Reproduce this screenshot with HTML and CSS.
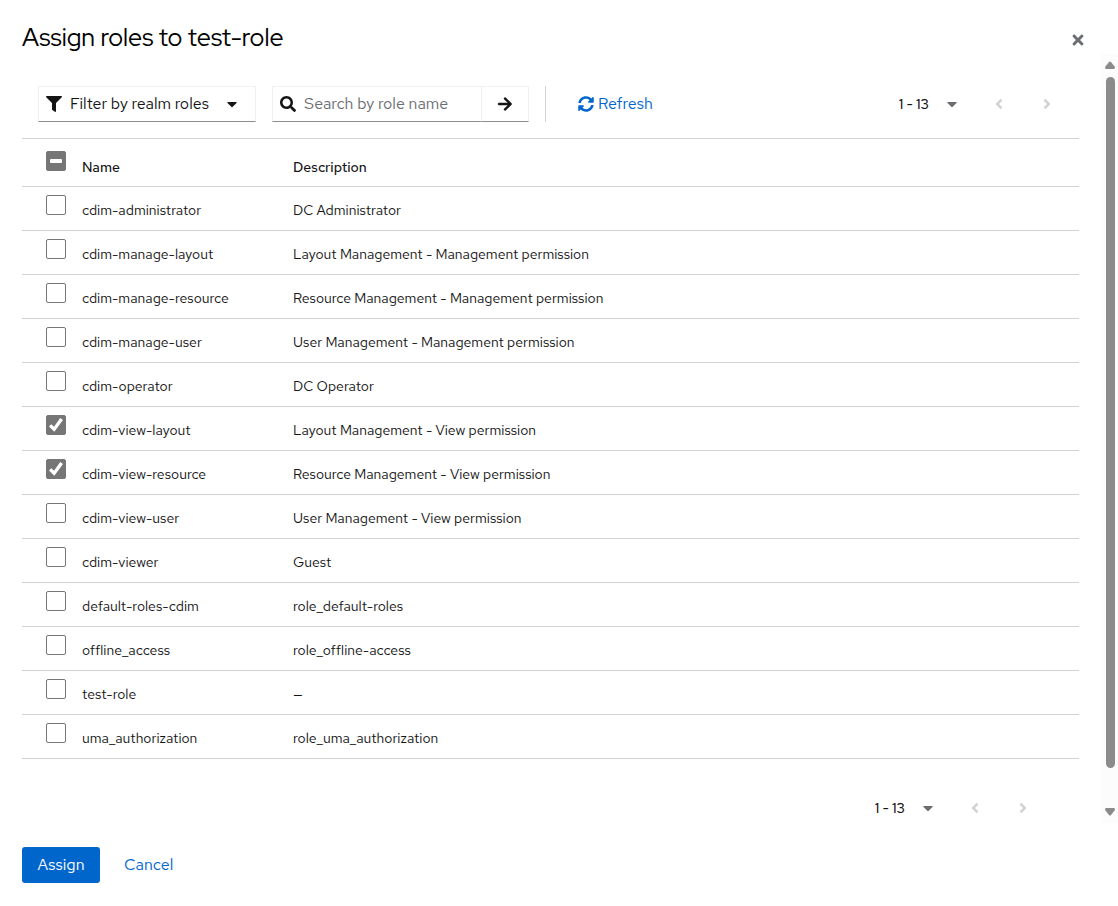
FILE: index.html
```html
<!DOCTYPE html>
<html lang="en">
<head>
<meta charset="utf-8">
<meta name="viewport" content="width=device-width, initial-scale=1">
<title>Assign roles to test-role</title>
<link rel="stylesheet" href="styles.css">
</head>
<body>
<svg class="sprite" aria-hidden="true">
  <symbol id="caret" viewBox="0 0 320 512"><path d="M31 192h258c18 0 27 22 14 34L174 355c-8 8-20 8-28 0L17 226c-13-12-4-34 14-34z"/></symbol>
  <symbol id="left" viewBox="0 0 256 512"><path d="M31.7 239l136-136c9.4-9.4 24.600-9.400 33.900 0l22.600 22.600c9.400 9.400 9.400 24.600 0 33.900L127.900 256l96.400 96.400c9.400 9.400 9.400 24.600 0 33.900L201.700 409c-9.400 9.400-24.600 9.400-33.900 0l-136-136c-9.500-9.400-9.500-24.600-.1-34z"/></symbol>
  <symbol id="right" viewBox="0 0 256 512"><path d="M224.300 273l-136 136c-9.400 9.400-24.600 9.400-33.900 0l-22.600-22.600c-9.400-9.400-9.400-24.600 0-33.900l96.400-96.400-96.400-96.400c-9.400-9.400-9.400-24.600 0-33.900L54.300 103c9.400-9.400 24.600-9.400 33.900 0l136 136c9.500 9.400 9.500 24.600.1 34z"/></symbol>
</svg>
<main class="modal" role="dialog" aria-labelledby="title">
  <header class="modal-header">
    <h1 class="title" id="title">Assign roles to test-role</h1>
    <button class="close" type="button" aria-label="Close"><svg width="12" height="16" viewBox="0 0 352 512"><path d="M242.720 256l100.070-100.070c12.280-12.280 12.280-32.190 0-44.480l-22.240-22.240c-12.280-12.280-32.190-12.280-44.480 0L176 189.280 75.930 89.210c-12.280-12.280-32.190-12.280-44.480 0L9.210 111.450c-12.280 12.280-12.280 32.190 0 44.480L109.280 256 9.210 356.070c-12.280 12.280-12.280 32.190 0 44.480l22.240 22.240c12.280 12.280 32.200 12.280 44.480 0L176 322.720l100.070 100.070c12.280 12.280 32.200 12.280 44.480 0l22.240-22.240c12.280-12.280 12.280-32.190 0-44.480L242.720 256z"/></svg></button>
  </header>

  <div class="modal-body">
    <div class="content">
      <div class="toolbar">
        <button class="filter" type="button" aria-haspopup="listbox">
          <svg width="16" height="16" viewBox="0 0 512 512"><path d="M487.976 0H24.028C2.710 0-8.047 25.866 7.058 40.971L192 225.941V432c0 7.831 3.821 15.170 10.237 19.662l80 55.980C298.020 518.690 320 507.493 320 487.980V225.941l184.947-184.970C520.021 25.896 509.338 0 487.976 0z"/></svg>
          <span class="filter-text">Filter by realm roles</span>
          <svg width="10" height="16"><use href="#caret"/></svg>
        </button>
        <form class="search" role="search">
          <label class="search-field">
            <svg width="16" height="16" viewBox="0 0 512 512"><path fill-rule="evenodd" d="M505 442.700L405.300 343c-4.500-4.500-10.600-7-17-7H372c27.600-35.300 44-79.700 44-128C416 93.100 322.900 0 208 0S0 93.100 0 208s93.100 208 208 208c48.300 0 92.700-16.400 128-44v16.300c0 6.400 2.500 12.500 7 17l99.700 99.700c9.400 9.400 24.600 9.400 33.900 0l28.300-28.300c9.400-9.400 9.400-24.600.1-34zM208 336c-70.700 0-128-57.200-128-128 0-70.700 57.200-128 128-128 70.700 0 128 57.200 128 128 0 70.700-57.200 128-128 128z"/></svg>
            <input class="search-input" type="text" placeholder="Search by role name" aria-label="Search by role name">
          </label>
          <button class="search-go" type="button" aria-label="Search"><svg width="14" height="16" viewBox="0 0 448 512"><path d="M190.500 66.900l22.200-22.200c9.400-9.400 24.600-9.400 33.900 0L441 239c9.400 9.400 9.400 24.600 0 33.900L246.600 467.300c-9.400 9.400-24.600 9.400-33.900 0l-22.200-22.200c-9.500-9.500-9.300-25 .4-34.300L311.400 296H24c-13.300 0-24-10.700-24-24v-32c0-13.300 10.700-24 24-24h287.400L190.900 101.200c-9.800-9.300-10-24.800-.4-34.300z"/></svg></button>
        </form>
        <div class="divider"></div>
        <button class="link refresh" type="button">
          <svg width="16" height="16" viewBox="0 0 512 512"><path d="M370.720 133.280C339.458 104.008 298.888 87.962 255.848 88c-77.458.068-144.328 53.178-162.791 126.850-1.344 5.363-6.122 9.150-11.651 9.150H24.103c-7.498 0-13.194-6.807-11.807-14.176C33.933 94.924 134.813 8 256 8c66.448 0 126.791 26.136 171.315 68.685L463.030 40.970C478.149 25.851 504 36.559 504 57.941V192c0 13.255-10.745 24-24 24H345.941c-21.382 0-32.090-25.851-16.971-40.971l41.750-41.749zM32 296h134.059c21.382 0 32.090 25.851 16.971 40.971l-41.750 41.750c31.262 29.273 71.835 45.319 114.876 45.280 77.418-.070 144.315-53.144 162.787-126.849 1.344-5.363 6.122-9.150 11.651-9.150h57.304c7.498 0 13.194 6.807 11.807 14.176C478.067 417.076 377.187 504 256 504c-66.448 0-126.791-26.136-171.315-68.685L48.970 471.030C33.851 486.149 8 475.441 8 454.059V320c0-13.255 10.745-24 24-24z"/></svg>
          Refresh
        </button>
        <nav class="pager" aria-label="Top pagination">
          <button class="pager-range" type="button">1 - 13 <svg width="10" height="16"><use href="#caret"/></svg></button>
          <button class="pager-step" type="button" disabled aria-label="Previous page"><svg width="8" height="16"><use href="#left"/></svg></button>
          <button class="pager-step" type="button" disabled aria-label="Next page"><svg width="8" height="16"><use href="#right"/></svg></button>
        </nav>
      </div>

      <table class="roles">
        <thead>
          <tr><th class="cell-check"><input class="check check-mixed" type="checkbox" aria-checked="mixed" aria-label="Select all rows"></th><th class="cell-name" scope="col">Name</th><th scope="col">Description</th></tr>
        </thead>
        <tbody>
          <tr><td class="cell-check"><input class="check" type="checkbox" aria-labelledby="r1"></td><td id="r1">cdim-administrator</td><td>DC Administrator</td></tr>
          <tr><td class="cell-check"><input class="check" type="checkbox" aria-labelledby="r2"></td><td id="r2">cdim-manage-layout</td><td>Layout Management - Management permission</td></tr>
          <tr><td class="cell-check"><input class="check" type="checkbox" aria-labelledby="r3"></td><td id="r3">cdim-manage-resource</td><td>Resource Management - Management permission</td></tr>
          <tr><td class="cell-check"><input class="check" type="checkbox" aria-labelledby="r4"></td><td id="r4">cdim-manage-user</td><td>User Management - Management permission</td></tr>
          <tr><td class="cell-check"><input class="check" type="checkbox" aria-labelledby="r5"></td><td id="r5">cdim-operator</td><td>DC Operator</td></tr>
          <tr><td class="cell-check"><input class="check" type="checkbox" checked aria-labelledby="r6"></td><td id="r6">cdim-view-layout</td><td>Layout Management - View permission</td></tr>
          <tr><td class="cell-check"><input class="check" type="checkbox" checked aria-labelledby="r7"></td><td id="r7">cdim-view-resource</td><td>Resource Management - View permission</td></tr>
          <tr><td class="cell-check"><input class="check" type="checkbox" aria-labelledby="r8"></td><td id="r8">cdim-view-user</td><td>User Management - View permission</td></tr>
          <tr><td class="cell-check"><input class="check" type="checkbox" aria-labelledby="r9"></td><td id="r9">cdim-viewer</td><td>Guest</td></tr>
          <tr><td class="cell-check"><input class="check" type="checkbox" aria-labelledby="r10"></td><td id="r10">default-roles-cdim</td><td>role_default-roles</td></tr>
          <tr><td class="cell-check"><input class="check" type="checkbox" aria-labelledby="r11"></td><td id="r11">offline_access</td><td>role_offline-access</td></tr>
          <tr><td class="cell-check"><input class="check" type="checkbox" aria-labelledby="r12"></td><td id="r12">test-role</td><td>—</td></tr>
          <tr><td class="cell-check"><input class="check" type="checkbox" aria-labelledby="r13"></td><td id="r13">uma_authorization</td><td>role_uma_authorization</td></tr>
        </tbody>
      </table>

      <nav class="pager pager-bottom" aria-label="Bottom pagination">
        <button class="pager-range" type="button">1 - 13 <svg width="10" height="16"><use href="#caret"/></svg></button>
        <button class="pager-step" type="button" disabled aria-label="Previous page"><svg width="8" height="16"><use href="#left"/></svg></button>
        <button class="pager-step" type="button" disabled aria-label="Next page"><svg width="8" height="16"><use href="#right"/></svg></button>
      </nav>
    </div>
    <div class="scrollbar" aria-hidden="true">
      <svg width="10" height="8" viewBox="0 0 10 8"><path d="M4 1q1-1 2 0l4 5q0 2-1 2H1q-1 0-1-2z"/></svg>
      <div class="scroll-thumb"></div>
      <svg width="10" height="8" viewBox="0 0 10 8"><path d="M4 7q1 1 2 0l4-5q0-2-1-2H1Q0 0 0 2z"/></svg>
    </div>
  </div>

  <footer class="modal-footer">
    <button class="primary" type="button">Assign</button>
    <button class="link" type="button">Cancel</button>
  </footer>
</main>
</body>
</html>
```

FILE: styles.css
```css
* { box-sizing: border-box; }

body {
  margin: 0;
  background: #fff;
  color: #151515;
  font-family: "Red Hat Text", "Open Sans", "Noto Sans", sans-serif;
  font-size: 16px;
  line-height: 24px;
}

button, input { font: inherit; color: inherit; }

button {
  padding: 0;
  border: 0;
  background: none;
  cursor: pointer;
}

svg { display: block; flex: none; fill: currentColor; }

.sprite { position: absolute; width: 0; height: 0; }

.modal {
  display: flex;
  flex-direction: column;
  min-height: 100vh;
}

.modal-header {
  display: flex;
  justify-content: space-between;
  align-items: flex-end;
  height: 54px;
  padding: 0 34px 0 22px;
}

.title {
  margin: 0;
  color: #000;
  font-family: "Red Hat Display", "Red Hat Text", "Open Sans", sans-serif;
  font-size: 25px;
  font-weight: 400;
  line-height: 32px;
}

.close { padding-bottom: 6px; color: #6a6e73; }

.modal-body { display: flex; }

.content {
  flex: 1;
  min-width: 0;
  padding: 32px 23px 0 22px;
}

.toolbar {
  display: flex;
  align-items: center;
  height: 52px;
  padding: 0 16px 16px;
}

.filter,
.search-field,
.search-go {
  display: flex;
  align-items: center;
  height: 36px;
  border: 1px solid #f0f0f0;
  border-bottom-color: #8a8d90;
}

.filter {
  width: 218px;
  margin-right: 16px;
  padding: 0 18px 0 7px;
  white-space: nowrap;
}

.filter-text { flex: 1; padding-left: 8px; text-align: left; }

.search { display: flex; width: 257px; }

.search-field { flex: 1; min-width: 0; padding-left: 7px; border-right: 0; }

.search-input {
  flex: 1;
  min-width: 0;
  padding: 0 0 0 8px;
  border: 0;
  outline: 0;
  background: none;
}

.search-input::placeholder { color: #6a6e73; opacity: 1; }

.search-go { justify-content: center; width: 48px; }

.divider {
  width: 1px;
  height: 36px;
  margin: 0 32px 0 16px;
  background: #d2d2d2;
}

.link { color: #06c; }

.refresh { display: flex; align-items: center; gap: 4px; }

.pager {
  display: flex;
  align-items: center;
  margin-left: auto;
}

.pager-range {
  display: flex;
  align-items: center;
  gap: 18px;
  margin-right: 18px;
  font-size: 14px;
  font-weight: 500;
}

.pager-range svg { color: #6a6e73; }

.pager-step {
  display: flex;
  justify-content: center;
  width: 48px;
  color: #d2d2d2;
}

.pager .pager-step:last-child { margin-right: -8px; }

.pager-bottom {
  justify-content: flex-end;
  height: 24px;
  margin-top: 37px;
  padding-right: 40px;
}

.roles {
  width: 100%;
  border-collapse: collapse;
  border-top: 1px solid #d2d2d2;
  font-size: 14px;
  line-height: 20px;
  text-align: left;
}

.roles tr { border-bottom: 1px solid #d2d2d2; }

.roles th,
.roles td { height: 44px; padding: 2px 0 0; }

.roles th { height: 48px; padding-top: 8px; font-weight: 500; }

.roles .cell-check {
  width: 60px;
  padding: 8px 0 0 24px;
  vertical-align: top;
}

.roles th.cell-check { padding-top: 12px; }

.cell-name { width: 211px; }

.check {
  display: grid;
  place-items: center;
  width: 20px;
  height: 20px;
  margin: 0;
  appearance: none;
  border: 1px solid #767676;
  border-radius: 2px;
  background: #fff;
}

.check:checked,
.check-mixed { background: #767676; }

.check:checked::before {
  content: "";
  width: 14px;
  height: 14px;
  background: #fff;
  clip-path: polygon(0 60%, 16% 44%, 36% 62%, 80% 0, 100% 14%, 38% 98%);
}

.check-mixed::before {
  content: "";
  width: 12px;
  height: 4px;
  border-radius: 1px;
  background: #fff;
}

.scrollbar {
  display: flex;
  flex-direction: column;
  align-items: center;
  width: 16px;
  height: 769px;
  padding: 7px 0;
  background: #fcfcfc;
  color: #8b8b8b;
}

.scroll-thumb {
  flex: 1;
  width: 9px;
  margin: 8px 0 40px;
  border-radius: 5px;
  background: #8b8b8b;
}

.modal-footer {
  display: flex;
  gap: 24px;
  padding: 24px 22px;
}

.primary {
  width: 78px;
  height: 36px;
  border-radius: 3px;
  background: #06c;
  color: #fff;
}
```
